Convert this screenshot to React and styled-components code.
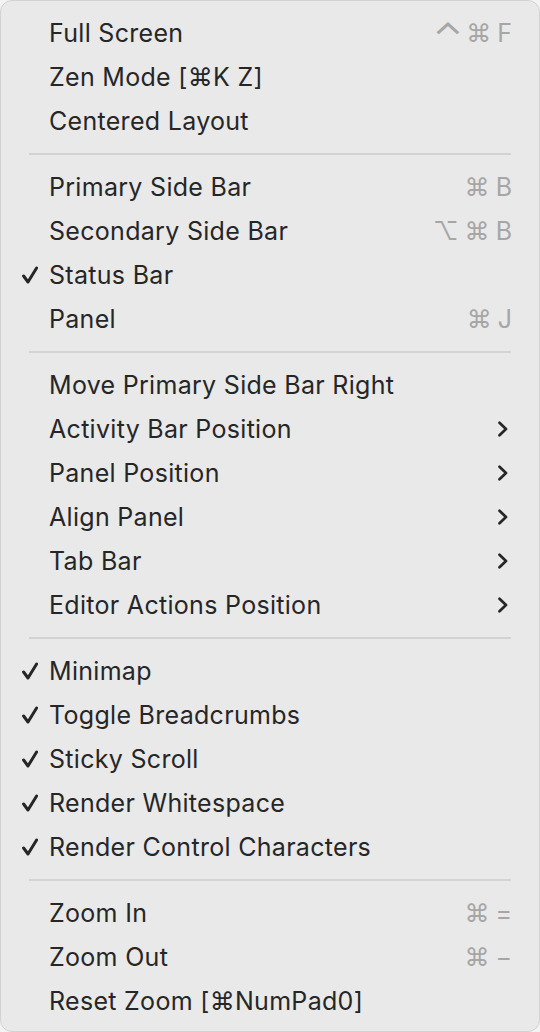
import React from "react";
import styled, { createGlobalStyle } from "styled-components";

const GlobalStyle = createGlobalStyle`
  html, body {
    margin: 0;
    padding: 0;
    background: #f3f3f3;
  }
  * {
    box-sizing: border-box;
  }
`;

const Menu = styled.div`
  width: 540px;
  height: 1032px;
  background: #e9e9e9;
  border: 1px solid #d2d2d2;
  border-radius: 12px;
  padding: 10px 0 0;
  font-family: Inter, "Liberation Sans", "DejaVu Sans", sans-serif;
  color: #262626;
  display: flex;
  flex-direction: column;
`;

const Row = styled.div`
  height: 44px;
  display: flex;
  align-items: center;
  padding: 0 27px 0 19px;
`;

const Check = styled.span`
  width: 29px;
  display: flex;
  align-items: center;
  padding-left: 2px;
`;

const Label = styled.span`
  flex: 1;
  font-size: 25px;
  letter-spacing: 0.3px;
  white-space: nowrap;
`;

const Shortcut = styled.span`
  font-size: 25px;
  color: #a6a6a6;
  font-family: Inter, "DejaVu Sans", sans-serif;
  display: flex;
  align-items: center;
  gap: 6px;
`;

const Key = styled.span`
  display: inline-block;
  ${(p) =>
    p.$wide &&
    `
    margin-right: 3px;
    transform: scale(1.55, 1.4) translateY(2px);
  `}
`;

const Separator = styled.div`
  height: 22px;
  display: flex;
  align-items: center;
  padding: 0 28px;
  &::after {
    content: "";
    flex: 1;
    height: 2px;
    background: #d3d3d3;
  }
`;

const SubArrow = styled.svg`
  margin-right: 3px;
`;

const CheckIcon = () => (
  <svg width="16" height="18" viewBox="0 0 16 18">
    <path d="M1.6 10 L6 16 L14.6 2" fill="none" stroke="#262626" strokeWidth="3" strokeLinecap="round" strokeLinejoin="round" />
  </svg>
);

const Chevron = () => (
  <SubArrow width="12" height="16" viewBox="0 0 12 16">
    <path d="M2.5 1.8 L9 8 L2.5 14.2" fill="none" stroke="#262626" strokeWidth="2.7" strokeLinecap="round" strokeLinejoin="round" />
  </SubArrow>
);

const groups = [
  [
    { label: "Full Screen", keys: ["⌃", "⌘", "F"] },
    { label: "Zen Mode [⌘K Z]" },
    { label: "Centered Layout" },
  ],
  [
    { label: "Primary Side Bar", keys: ["⌘", "B"] },
    { label: "Secondary Side Bar", keys: ["⌥", "⌘", "B"] },
    { label: "Status Bar", checked: true },
    { label: "Panel", keys: ["⌘", "J"] },
  ],
  [
    { label: "Move Primary Side Bar Right" },
    { label: "Activity Bar Position", sub: true },
    { label: "Panel Position", sub: true },
    { label: "Align Panel", sub: true },
    { label: "Tab Bar", sub: true },
    { label: "Editor Actions Position", sub: true },
  ],
  [
    { label: "Minimap", checked: true },
    { label: "Toggle Breadcrumbs", checked: true },
    { label: "Sticky Scroll", checked: true },
    { label: "Render Whitespace", checked: true },
    { label: "Render Control Characters", checked: true },
  ],
  [
    { label: "Zoom In", keys: ["⌘", "="] },
    { label: "Zoom Out", keys: ["⌘", "−"] },
    { label: "Reset Zoom [⌘NumPad0]" },
  ],
];

const MenuItem = ({ item }) => (
  <Row>
    <Check>{item.checked && <CheckIcon />}</Check>
    <Label>{item.label}</Label>
    {item.keys && (
      <Shortcut>
        {item.keys.map((k, i) => (
          <Key key={i} $wide={k === "⌃"}>
            {k}
          </Key>
        ))}
      </Shortcut>
    )}
    {item.sub && <Chevron />}
  </Row>
);

export default function App() {
  return (
    <>
      <GlobalStyle />
      <Menu>
        {groups.map((group, gi) => (
          <React.Fragment key={gi}>
            {gi > 0 && <Separator />}
            {group.map((item) => (
              <MenuItem key={item.label} item={item} />
            ))}
          </React.Fragment>
        ))}
      </Menu>
    </>
  );
}
